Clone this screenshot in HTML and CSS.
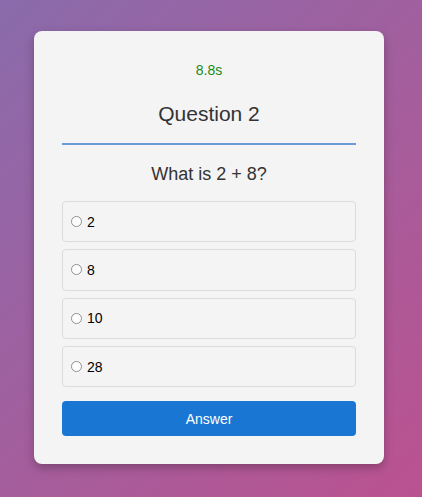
FILE: index.html
```html
<!DOCTYPE html>
<html>
<head>
<meta charset="utf-8">
<link rel="stylesheet" href="styles.css">
</head>
<body>
<div class="card">
  <div class="timer">8.8s</div>
  <h2 class="title">Question 2</h2>
  <div class="rule"></div>
  <p class="question">What is 2 + 8?</p>
  <div class="options">
    <label class="option"><input type="radio" name="a"><span>2</span></label>
    <label class="option"><input type="radio" name="a"><span>8</span></label>
    <label class="option"><input type="radio" name="a"><span>10</span></label>
    <label class="option"><input type="radio" name="a"><span>28</span></label>
  </div>
  <button class="answer">Answer</button>
</div>
</body>
</html>
```
FILE: styles.css
```css
html, body {
  margin: 0;
  height: 100%;
}
body {
  background: linear-gradient(135deg, #8a6bab 0%, #bb5290 100%);
  font-family: "Liberation Sans", Arial, sans-serif;
  padding: 31px 0 0 34px;
  box-sizing: border-box;
  overflow: hidden;
}
.card {
  width: 350px;
  box-sizing: border-box;
  background: #f4f4f4;
  border-radius: 8px;
  box-shadow: 0 4px 10px rgba(0, 0, 0, 0.25);
  padding: 31px 28px 28px;
  display: flex;
  flex-direction: column;
}
.timer {
  text-align: center;
  color: #1a8a1a;
  font-size: 14px;
  line-height: 16px;
}
.title {
  margin: 24px 0 0;
  text-align: center;
  font-size: 21px;
  font-weight: normal;
  line-height: 23px;
  color: #333;
}
.rule {
  margin-top: 18px;
  height: 2px;
  background: #6b9bd6;
}
.question {
  margin: 19px 0 0;
  text-align: center;
  font-size: 18px;
  line-height: 21px;
  color: #333;
}
.options {
  margin-top: 16px;
  display: flex;
  flex-direction: column;
  gap: 7px;
}
.option {
  height: 41.33px;
  box-sizing: border-box;
  border: 1px solid #dcdcdc;
  border-radius: 4px;
  display: flex;
  align-items: center;
  padding-left: 8px;
  font-size: 14px;
  color: #000;
}
.option input {
  appearance: none;
  -webkit-appearance: none;
  margin: 0 5px 0 0;
  width: 11px;
  height: 11px;
  box-sizing: border-box;
  border: 1px solid #8f8f8f;
  border-radius: 50%;
  background: #fff;
}
.answer {
  margin-top: 14px;
  height: 35px;
  border: none;
  border-radius: 4px;
  background: #1976d2;
  color: #fff;
  font-family: inherit;
  font-size: 14px;
}
```
